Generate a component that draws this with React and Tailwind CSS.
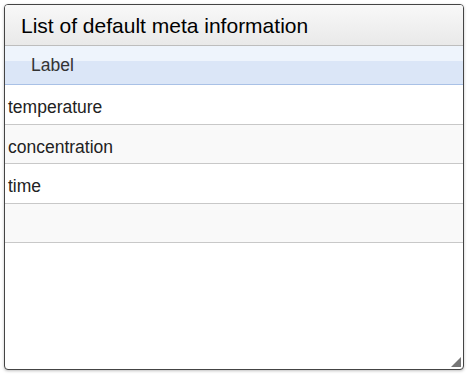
import React from 'react';

const rows = ["temperature", "concentration", "time", ""];

const ResizeGrip = () => (
  <svg width="10" height="10" viewBox="0 0 10 10" className="absolute right-[2px] bottom-[2px]">
    <path d="M10 0 L10 10 L0 10 Z" fill="#777" />
  </svg>
);

const App = () => {
  return (
    <div className="w-[468px] h-[376px] bg-white p-1" style={{ fontFamily: '"Liberation Sans", Arial, sans-serif' }}>
      <div className="relative w-[460px] h-[366px] border border-[#444] rounded-[4px] overflow-hidden bg-white shadow-[0_1px_3px_rgba(0,0,0,0.25)]">
        <div className="h-[41px] flex items-center pl-4 pt-[2px] border-b border-[#bdbdbd] bg-gradient-to-b from-[#f8f8f8] to-[#e9e9e9]">
          <span className="text-[21px] text-black">List of default meta information</span>
        </div>
        <div className="h-[39px] flex items-center pl-[26px] pt-[1px] border-b border-[#a9c1e6] bg-[linear-gradient(to_bottom,#eef4fc_0%,#eef4fc_40%,#dbe6f7_40%,#dbe6f7_100%)]">
          <span className="text-[17.5px] text-[#333]">Label</span>
        </div>
        {rows.map((r, i) => (
          <div
            key={i}
            className={`h-[39.5px] flex items-center pl-[3px] pt-[6px] border-b border-[#c8c8c8] ${i % 2 === 0 ? "bg-white" : "bg-[#f9f9f9]"}`}
          >
            <span className="text-[17.5px] text-[#222]">{r}</span>
          </div>
        ))}
        <ResizeGrip />
      </div>
    </div>
  );
};

export default App;
